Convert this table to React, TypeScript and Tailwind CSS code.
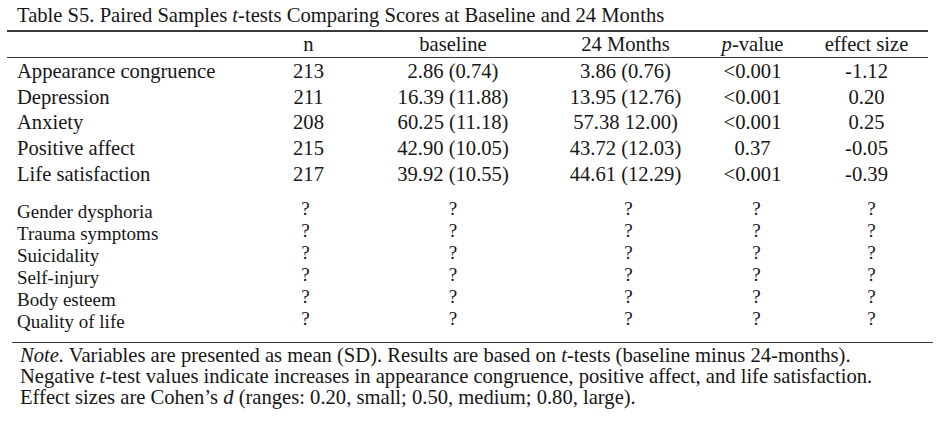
import React from "react";

const cols = "grid grid-cols-[255px_93px_196px_149px_105px_123px]";

const dataRows = [
  ["Appearance congruence", "213", "2.86 (0.74)", "3.86 (0.76)", "<0.001", "-1.12"],
  ["Depression", "211", "16.39 (11.88)", "13.95 (12.76)", "<0.001", "0.20"],
  ["Anxiety", "208", "60.25 (11.18)", "57.38 12.00)", "<0.001", "0.25"],
  ["Positive affect", "215", "42.90 (10.05)", "43.72 (12.03)", "0.37", "-0.05"],
  ["Life satisfaction", "217", "39.92 (10.55)", "44.61 (12.29)", "<0.001", "-0.39"],
];

const qRows = [
  "Gender dysphoria",
  "Trauma symptoms",
  "Suicidality",
  "Self-injury",
  "Body esteem",
  "Quality of life",
];

export default function App() {
  return (
    <div className="w-[938px] h-[426px] bg-white text-[#161616] font-['Liberation_Serif',serif] overflow-hidden">
      <div className="h-[30px] pl-[17px] pt-[4px] text-[20.6px] leading-[23px]">
        Table S5. Paired Samples <i>t</i>-tests Comparing Scores at Baseline and 24 Months
      </div>
      <div className="ml-[7px] w-[921px]">
        <div className="h-[1.5px] bg-[#3a3a3a]" />
        <div className={`${cols} h-[25px] items-center text-[20.6px] leading-[22px] text-center`}>
          <div />
          <div>n</div>
          <div>baseline</div>
          <div>24 Months</div>
          <div>
            <i>p</i>-value
          </div>
          <div>effect size</div>
        </div>
        <div className="h-[1.5px] bg-[#3a3a3a]" />
        <div className="flex flex-col">
          {dataRows.map((r) => (
            <div key={r[0]} className={`${cols} h-[25.75px] items-center text-[20.6px] leading-[22px] text-center`}>
              <div className="text-left pl-[10px]">{r[0]}</div>
              <div>{r[1]}</div>
              <div>{r[2]}</div>
              <div>{r[3]}</div>
              <div>{r[4]}</div>
              <div>{r[5]}</div>
            </div>
          ))}
        </div>
        <div className="flex flex-col mt-[14px]">
          {qRows.map((l) => (
            <div key={l} className={`${cols} h-[22px] items-center text-[19px] leading-[20px] text-center`}>
              <div className="text-left pl-[10px]">{l}</div>
              <div className="-translate-x-[3px] -translate-y-[3px]">?</div>
              <div className="-translate-y-[3px]">?</div>
              <div className="translate-x-[3px] -translate-y-[3px]">?</div>
              <div className="translate-x-[4px] -translate-y-[3px]">?</div>
              <div className="translate-x-[5px] -translate-y-[3px]">?</div>
            </div>
          ))}
        </div>
      </div>
      <div className="ml-[12px] w-[921px] mt-[9px] h-[1.5px] bg-[#3a3a3a]" />
      <div className="pl-[20px] pt-[2px] text-[20.6px] leading-[21px]">
        <div>
          <i>Note.</i> Variables are presented as mean (SD). Results are based on <i>t</i>-tests (baseline minus 24-months).
        </div>
        <div>
          Negative <i>t</i>-test values indicate increases in appearance congruence, positive affect, and life satisfaction.
        </div>
        <div>
          Effect sizes are Cohen’s <i>d</i> (ranges: 0.20, small; 0.50, medium; 0.80, large).
        </div>
      </div>
    </div>
  );
}
